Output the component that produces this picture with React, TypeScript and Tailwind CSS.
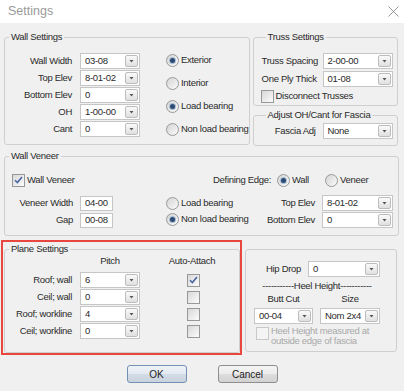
import React from "react";

// Windows-style "Settings" dialog: wall / truss / veneer / plane settings.

function Arrow() {
  return (
    <svg width="5" height="3" viewBox="0 0 5 3">
      <path d="M0.5 0h4L2.5 2.5z" fill="#555" />
    </svg>
  );
}

function Combo({ value, className = "" }: { value: string; className?: string }) {
  return (
    <div className={`flex items-center border border-[#c6c6c6] bg-white ${className}`}>
      <span className="flex-1 truncate pl-[4px]">{value}</span>
      <span className="mr-[1px] flex h-[12px] w-[13px] items-center justify-center rounded-[2px] border border-[#bcbcbc] bg-linear-to-b from-[#fafafa] to-[#e0e0e0]">
        <Arrow />
      </span>
    </div>
  );
}

function TextBox({ value, className = "" }: { value: string; className?: string }) {
  return (
    <div className={`flex items-center border border-[#c6c6c6] bg-white pl-[4px] ${className}`}>{value}</div>
  );
}

function Radio({ checked = false, label }: { checked?: boolean; label: string }) {
  return (
    <div className="flex h-[14px] items-center gap-[2px] whitespace-nowrap">
      <span className="flex h-[13px] w-[13px] shrink-0 items-center justify-center rounded-full border border-[#979898] bg-linear-to-br from-[#d4d4d4] to-[#fbfbfb]">
        {checked ? <span className="h-[5px] w-[5px] rounded-full bg-[#2d4c74] ring-1 ring-[#a9bed6]" /> : null}
      </span>
      <span>{label}</span>
    </div>
  );
}

function Check({ checked = false, disabled = false }: { checked?: boolean; disabled?: boolean }) {
  return (
    <span
      className={`flex h-[13px] w-[13px] shrink-0 items-center justify-center border ${
        disabled ? "border-[#c8c8c8] bg-[#f4f4f4]" : "border-[#979898] bg-linear-to-br from-[#d8d8d8] to-[#fcfcfc]"
      }`}
    >
      {checked ? (
        <svg width="9" height="8" viewBox="0 0 9 8">
          <path d="M1 4.2l2.4 2.4L8 1" stroke="#4a66a6" strokeWidth="1.6" fill="none" />
        </svg>
      ) : null}
    </span>
  );
}

function Group({ title, className = "", children }: { title: string; className?: string; children: React.ReactNode }) {
  return (
    <fieldset className={`rounded-[3px] border border-[#cfcfcf] ${className}`}>
      <legend className="ml-[4px] px-[2px] leading-[12px]">{title}</legend>
      {children}
    </fieldset>
  );
}

const WALL_ROWS = [
  ["Wall Width", "03-08"],
  ["Top Elev", "8-01-02"],
  ["Bottom Elev", "0"],
  ["OH", "1-00-00"],
  ["Cant", "0"],
];

const PLANE_ROWS = [
  ["Roof; wall", "6", true],
  ["Ceil; wall", "0", false],
  ["Roof; workline", "4", false],
  ["Ceil; workline", "0", false],
] as const;

export default function App() {
  return (
    <div className="flex h-[391px] w-[404px] flex-col whitespace-nowrap bg-[#f0f0f0] font-['Liberation_Sans',Arial,sans-serif] text-[9.5px] tracking-[-0.3px] text-[#2a2a2a]">
      {/* title bar */}
      <div className="flex h-[23px] shrink-0 items-center justify-between bg-white pl-[8px] pr-[5px]">
        <span className="text-[12.5px] tracking-normal text-[#9a9a9a]">Settings</span>
        <svg width="11" height="11" viewBox="0 0 11 11">
          <path d="M0.5 0.5l10 10M10.5 0.5l-10 10" stroke="#8a8a8a" strokeWidth="0.9" />
        </svg>
      </div>

      {/* row 1 */}
      <div className="mt-[8px] flex items-start pl-[4px]">
        <Group title="Wall Settings" className="w-[245px] pb-[7px]">
          <div className="mt-[10px] flex">
            <div className="flex flex-col gap-[1px]">
              {WALL_ROWS.map(([label, value]) => (
                <div key={label} className="flex h-[16px] items-center gap-[8px]">
                  <span className="w-[67px] text-right">{label}</span>
                  <Combo value={value} className="h-[16px] w-[60px]" />
                </div>
              ))}
            </div>
            <div className="ml-[26px] flex flex-col gap-[9px]">
              <Radio checked label="Exterior" />
              <Radio label="Interior" />
              <Radio checked label="Load bearing" />
              <Radio label="Non load bearing" />
            </div>
          </div>
        </Group>

        <div className="ml-[3px] flex w-[145px] flex-col gap-[3px]">
          <Group title="Truss Settings" className="pb-[2px] pl-[8px] pr-[4px]">
            <div className="mt-[10px] flex flex-col gap-[2px]">
              <div className="flex h-[16px] items-center">
                <span className="w-[61px]">Truss Spacing</span>
                <Combo value="2-00-00" className="h-[16px] w-[70px]" />
              </div>
              <div className="flex h-[16px] items-center">
                <span className="w-[61px]">One Ply Thick</span>
                <Combo value="01-08" className="h-[16px] w-[70px]" />
              </div>
            </div>
            <div className="ml-[-1px] mt-[2px] flex h-[14px] items-center gap-[2px]">
              <Check />
              <span>Disconnect Trusses</span>
            </div>
          </Group>
          <Group title="Adjust OH/Cant for Fascia" className="pb-[6px] pl-[8px] pr-[4px]">
            <div className="mt-[2px] flex h-[16px] items-center">
              <span className="w-[54px] text-right">Fascia Adj</span>
              <Combo value="None" className="ml-[7px] h-[16px] w-[70px]" />
            </div>
          </Group>
        </div>
      </div>

      {/* wall veneer */}
      <Group title="Wall Veneer" className="ml-[4px] mt-[4px] w-[395px] pb-[7px] pr-[5px]">
        <div className="mt-[11px] flex h-[14px] items-center">
          <div className="flex w-[208px] items-center gap-[2px] pl-[7px]">
            <Check checked />
            <span>Wall Veneer</span>
          </div>
          <span className="w-[64px]">Defining Edge:</span>
          <div className="w-[48px]">
            <Radio checked label="Wall" />
          </div>
          <Radio label="Veneer" />
        </div>
        <div className="mt-[8px] flex">
          <div className="flex flex-col gap-[1px]">
            {[
              ["Veneer Width", "04-00"],
              ["Gap", "00-08"],
            ].map(([label, value]) => (
              <div key={label} className="flex h-[16px] items-center gap-[7px]">
                <span className="w-[68px] text-right">{label}</span>
                <TextBox value={value} className="h-[15px] w-[33px]" />
              </div>
            ))}
          </div>
          <div className="ml-[53px] flex flex-col gap-[2px] pt-[1px]">
            <Radio label="Load bearing" />
            <Radio checked label="Non load bearing" />
          </div>
          <div className="ml-auto flex flex-col gap-[1px]">
            {[
              ["Top Elev", "8-01-02"],
              ["Bottom Elev", "0"],
            ].map(([label, value]) => (
              <div key={label} className="flex h-[16px] items-center gap-[7px]">
                <span className="w-[60px] text-right">{label}</span>
                <Combo value={value} className="h-[16px] w-[71px]" />
              </div>
            ))}
          </div>
        </div>
      </Group>

      {/* plane settings + heel height */}
      <div className="mt-[4px] flex items-start">
        <div className="ml-[1px] w-[241px] border-2 border-[#e8463f] pl-[1px] pt-[1px]">
          <Group title="Plane Settings" className="pb-[13px]">
            <div className="flex h-[12px] items-center">
              <span className="ml-[75px] w-[60px] text-center">Pitch</span>
              <span className="ml-[22px] w-[60px] text-center">Auto-Attach</span>
            </div>
            <div className="mt-[5px] flex flex-col gap-[1px]">
              {PLANE_ROWS.map(([label, value, on]) => (
                <div key={label} className="flex h-[16px] items-center">
                  <span className="w-[67px] text-right">{label}</span>
                  <Combo value={value} className="ml-[8px] h-[16px] w-[60px]" />
                  <span className="ml-[47px]">
                    <Check checked={on} />
                  </span>
                </div>
              ))}
            </div>
          </Group>
        </div>

        <div className="ml-[3px] mt-[9px] h-[103px] w-[152px] rounded-[3px] border border-[#cfcfcf] pl-[8px] pt-[11px]">
          <div className="flex h-[16px] items-center">
            <span className="ml-[12px] w-[36px]">Hip Drop</span>
            <Combo value="0" className="ml-[6px] h-[16px] w-[72px]" />
          </div>
          <div className="mt-[3px] w-[126px] text-center leading-[12px]">-----------Heel Height-----------</div>
          <div className="mt-[1px] flex leading-[12px]">
            <span className="w-[59px] text-center">Butt Cut</span>
            <span className="ml-[7px] w-[60px] text-center">Size</span>
          </div>
          <div className="mt-[3px] flex gap-[7px]">
            <Combo value="00-04" className="h-[16px] w-[59px]" />
            <Combo value="Nom 2x4" className="h-[16px] w-[60px]" />
          </div>
          <div className="mt-[2px] flex gap-[2px] pl-[2px] text-[#a8a8a8]">
            <span className="mt-[1px]">
              <Check disabled />
            </span>
            <span className="leading-[10px]">
              Heel Height measured at
              <br />
              outside edge of fascia
            </span>
          </div>
        </div>
      </div>

      {/* buttons */}
      <div className="mt-[10px] flex justify-center gap-[31px] tracking-normal">
        <button className="h-[18px] w-[60px] rounded-[3px] border border-[#7391b3] bg-[linear-gradient(#eef3f8,#e2e9f0_50%,#d3dce6_50%,#c9d3de)] text-[10px] text-[#222]">
          OK
        </button>
        <button className="h-[18px] w-[60px] rounded-[3px] border border-[#8e8e8e] bg-[linear-gradient(#f4f4f4,#ebebeb_50%,#dddddd_50%,#d2d2d2)] text-[10px] text-[#222]">
          Cancel
        </button>
      </div>
    </div>
  );
}
